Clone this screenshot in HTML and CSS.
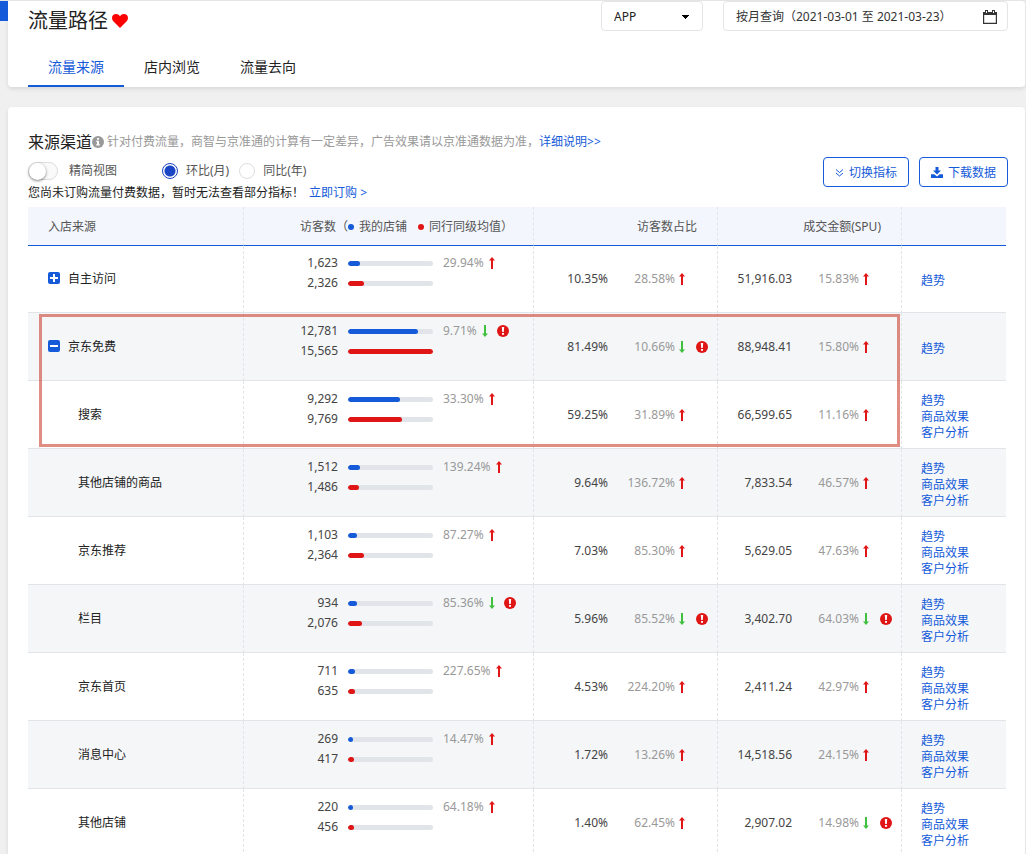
FILE: index.html
```html
<!DOCTYPE html>
<html lang="zh-CN">
<head>
    <meta charset="UTF-8">
    <meta name="viewport" content="width=device-width, initial-scale=1.0">
    <title>流量路径</title>
    <link rel="stylesheet" href="styles.css">
</head>
<body>
    <!-- 图标 -->
    <svg class="sprite" aria-hidden="true">
        <symbol id="i-up" viewBox="0 0 6 12"><path d="M3 0L6 3.6H4V12H2V3.6H0z"/></symbol>
        <symbol id="i-down" viewBox="0 0 6 12"><path d="M3 12L0 8.4H2V0H4V8.4H6z"/></symbol>
        <symbol id="i-alert" viewBox="0 0 12 12"><circle cx="6" cy="6" r="6" fill="#e01515"/><path d="M4.800 2h2.400L6.800 7H5.200zM5 7.900h2v1.900H5z" fill="#fff"/></symbol>
    </svg>

    <header class="panel page-head">
        <span class="side-tag"></span>
        <div class="head-row">
            <h1>流量路径
                <svg class="heart" viewBox="0 0 16 14"><path d="M8 14L1.3 7.2C-.5 5.2-.3 2.4 1.3 1 3.3-.7 6.3-.2 8 2.2 9.700-.2 12.700-.7 14.700 1c1.600 1.400 1.800 4.200 0 6.200z" fill="#f00"/></svg>
            </h1>
            <div class="filters">
                <select class="terminal" aria-label="终端">
                    <option>APP</option>
                </select>
                <div class="date-box">
                    <input type="text" aria-label="查询日期" value="按月查询（2021-03-01 至 2021-03-23）" readonly>
                    <svg class="calendar" viewBox="0 0 14 14"><path d="M.6 2.500h12.800v10.900H.6z" fill="none" stroke="#333" stroke-width="1.200"/><path d="M0 2h14v3H0zM2 0h3v3H2zM9 0h3v3H9z" fill="#333"/><path d="M3 1h1v2H3zM10 1h1v2h-1z" fill="#fff"/></svg>
                </div>
            </div>
        </div>
        <nav class="tabs">
            <a href="#" class="active">流量来源</a>
            <a href="#">店内浏览</a>
            <a href="#">流量去向</a>
        </nav>
    </header>

    <main class="panel source">
        <div class="source-head">
            <div>
                <div class="title-row">
                    <h2>来源渠道</h2>
                    <svg class="info" viewBox="0 0 12 12"><circle cx="6" cy="6" r="6" fill="#999"/><path d="M5 2h2v1.700H5zM4.200 4.700H7v3.600h.8v1.200H4.200V8.300H5V5.900h-.8z" fill="#fff"/></svg>
                    <p class="hint">针对付费流量，商智与京准通的计算有一定差异，广告效果请以京准通数据为准，<a href="#">详细说明&gt;&gt;</a></p>
                </div>
                <div class="option-row">
                    <label class="simple"><input type="checkbox" class="switch">精简视图</label>
                    <label class="compare"><input type="radio" name="compare" checked>环比(月)</label>
                    <label class="compare"><input type="radio" name="compare">同比(年)</label>
                </div>
                <p class="notice">您尚未订购流量付费数据，暂时无法查看部分指标！<a href="#">立即订购 &gt;</a></p>
            </div>
            <div class="actions">
                <button type="button"><svg class="chevrons" viewBox="0 0 8 8"><path d="M.5.500L4 3.500 7.500.500M.5 4L4 7 7.500 4" fill="none" stroke="#155bd9"/></svg>切换指标</button>
                <button type="button"><svg class="download" viewBox="0 0 12 11"><path d="M4.500 0h3v3.500H10L6 7.600 2 3.500h2.500zM0 7.200h3.300L6 9.500l2.700-2.300H12V11H0z" fill="#155bd9"/></svg>下载数据</button>
            </div>
        </div>

        <div class="table-wrap">
            <table>
                <colgroup>
                    <col>
                    <col class="col-visitor">
                    <col class="col-num">
                    <col class="col-num">
                    <col class="col-link">
                </colgroup>
                <thead>
                    <tr>
                        <th class="name">入店来源</th>
                        <th>访客数（<i class="dot blue"></i>我的店铺<i class="dot red"></i>同行同级均值）</th>
                        <th>访客数占比</th>
                        <th>成交金额(SPU)</th>
                        <th></th>
                    </tr>
                </thead>
                <tbody>
                    <tr>
                        <td class="name"><button type="button" class="toggle" aria-label="展开"><svg viewBox="0 0 12 12"><path d="M2 5h8v2H2zM5 2h2v8H5z"/></svg></button>自主访问</td>
                        <td class="visitor"><div class="bars">
                            <span class="n">1,623</span><span class="bar"><i class="blue" style="width:14%"></i></span><span class="rate">29.94%<svg class="up"><use href="#i-up"/></svg></span>
                            <span class="n">2,326</span><span class="bar"><i class="red" style="width:19%"></i></span>
                        </div></td>
                        <td><div class="pair"><span class="n">10.35%</span><span class="rate">28.58%</span><svg class="up"><use href="#i-up"/></svg></div></td>
                        <td><div class="pair"><span class="n">51,916.03</span><span class="rate">15.83%</span><svg class="up"><use href="#i-up"/></svg></div></td>
                        <td class="links"><a href="#">趋势</a></td>
                    </tr>
                    <tr>
                        <td class="name"><button type="button" class="toggle" aria-label="收起"><svg viewBox="0 0 12 12"><path d="M2 5h8v2H2z"/></svg></button>京东免费</td>
                        <td class="visitor"><div class="bars">
                            <span class="n">12,781</span><span class="bar"><i class="blue" style="width:82%"></i></span><span class="rate">9.71%<svg class="down"><use href="#i-down"/></svg><svg class="alert"><use href="#i-alert"/></svg></span>
                            <span class="n">15,565</span><span class="bar"><i class="red" style="width:100%"></i></span>
                        </div></td>
                        <td><div class="pair"><span class="n">81.49%</span><span class="rate">10.66%</span><svg class="down"><use href="#i-down"/></svg><svg class="alert"><use href="#i-alert"/></svg></div></td>
                        <td><div class="pair"><span class="n">88,948.41</span><span class="rate">15.80%</span><svg class="up"><use href="#i-up"/></svg></div></td>
                        <td class="links"><a href="#">趋势</a></td>
                    </tr>
                    <tr>
                        <td class="name child">搜索</td>
                        <td class="visitor"><div class="bars">
                            <span class="n">9,292</span><span class="bar"><i class="blue" style="width:61%"></i></span><span class="rate">33.30%<svg class="up"><use href="#i-up"/></svg></span>
                            <span class="n">9,769</span><span class="bar"><i class="red" style="width:64%"></i></span>
                        </div></td>
                        <td><div class="pair"><span class="n">59.25%</span><span class="rate">31.89%</span><svg class="up"><use href="#i-up"/></svg></div></td>
                        <td><div class="pair"><span class="n">66,599.65</span><span class="rate">11.16%</span><svg class="up"><use href="#i-up"/></svg></div></td>
                        <td class="links"><a href="#">趋势</a><a href="#">商品效果</a><a href="#">客户分析</a></td>
                    </tr>
                    <tr>
                        <td class="name child">其他店铺的商品</td>
                        <td class="visitor"><div class="bars">
                            <span class="n">1,512</span><span class="bar"><i class="blue" style="width:14%"></i></span><span class="rate">139.24%<svg class="up"><use href="#i-up"/></svg></span>
                            <span class="n">1,486</span><span class="bar"><i class="red" style="width:13%"></i></span>
                        </div></td>
                        <td><div class="pair"><span class="n">9.64%</span><span class="rate">136.72%</span><svg class="up"><use href="#i-up"/></svg></div></td>
                        <td><div class="pair"><span class="n">7,833.54</span><span class="rate">46.57%</span><svg class="up"><use href="#i-up"/></svg></div></td>
                        <td class="links"><a href="#">趋势</a><a href="#">商品效果</a><a href="#">客户分析</a></td>
                    </tr>
                    <tr>
                        <td class="name child">京东推荐</td>
                        <td class="visitor"><div class="bars">
                            <span class="n">1,103</span><span class="bar"><i class="blue" style="width:11%"></i></span><span class="rate">87.27%<svg class="up"><use href="#i-up"/></svg></span>
                            <span class="n">2,364</span><span class="bar"><i class="red" style="width:19%"></i></span>
                        </div></td>
                        <td><div class="pair"><span class="n">7.03%</span><span class="rate">85.30%</span><svg class="up"><use href="#i-up"/></svg></div></td>
                        <td><div class="pair"><span class="n">5,629.05</span><span class="rate">47.63%</span><svg class="up"><use href="#i-up"/></svg></div></td>
                        <td class="links"><a href="#">趋势</a><a href="#">商品效果</a><a href="#">客户分析</a></td>
                    </tr>
                    <tr>
                        <td class="name child">栏目</td>
                        <td class="visitor"><div class="bars">
                            <span class="n">934</span><span class="bar"><i class="blue" style="width:10%"></i></span><span class="rate">85.36%<svg class="down"><use href="#i-down"/></svg><svg class="alert"><use href="#i-alert"/></svg></span>
                            <span class="n">2,076</span><span class="bar"><i class="red" style="width:17%"></i></span>
                        </div></td>
                        <td><div class="pair"><span class="n">5.96%</span><span class="rate">85.52%</span><svg class="down"><use href="#i-down"/></svg><svg class="alert"><use href="#i-alert"/></svg></div></td>
                        <td><div class="pair"><span class="n">3,402.70</span><span class="rate">64.03%</span><svg class="down"><use href="#i-down"/></svg><svg class="alert"><use href="#i-alert"/></svg></div></td>
                        <td class="links"><a href="#">趋势</a><a href="#">商品效果</a><a href="#">客户分析</a></td>
                    </tr>
                    <tr>
                        <td class="name child">京东首页</td>
                        <td class="visitor"><div class="bars">
                            <span class="n">711</span><span class="bar"><i class="blue" style="width:8%"></i></span><span class="rate">227.65%<svg class="up"><use href="#i-up"/></svg></span>
                            <span class="n">635</span><span class="bar"><i class="red" style="width:8%"></i></span>
                        </div></td>
                        <td><div class="pair"><span class="n">4.53%</span><span class="rate">224.20%</span><svg class="up"><use href="#i-up"/></svg></div></td>
                        <td><div class="pair"><span class="n">2,411.24</span><span class="rate">42.97%</span><svg class="up"><use href="#i-up"/></svg></div></td>
                        <td class="links"><a href="#">趋势</a><a href="#">商品效果</a><a href="#">客户分析</a></td>
                    </tr>
                    <tr>
                        <td class="name child">消息中心</td>
                        <td class="visitor"><div class="bars">
                            <span class="n">269</span><span class="bar"><i class="blue" style="width:6%"></i></span><span class="rate">14.47%<svg class="up"><use href="#i-up"/></svg></span>
                            <span class="n">417</span><span class="bar"><i class="red" style="width:7%"></i></span>
                        </div></td>
                        <td><div class="pair"><span class="n">1.72%</span><span class="rate">13.26%</span><svg class="up"><use href="#i-up"/></svg></div></td>
                        <td><div class="pair"><span class="n">14,518.56</span><span class="rate">24.15%</span><svg class="up"><use href="#i-up"/></svg></div></td>
                        <td class="links"><a href="#">趋势</a><a href="#">商品效果</a><a href="#">客户分析</a></td>
                    </tr>
                    <tr>
                        <td class="name child">其他店铺</td>
                        <td class="visitor"><div class="bars">
                            <span class="n">220</span><span class="bar"><i class="blue" style="width:6%"></i></span><span class="rate">64.18%<svg class="up"><use href="#i-up"/></svg></span>
                            <span class="n">456</span><span class="bar"><i class="red" style="width:7%"></i></span>
                        </div></td>
                        <td><div class="pair"><span class="n">1.40%</span><span class="rate">62.45%</span><svg class="up"><use href="#i-up"/></svg></div></td>
                        <td><div class="pair"><span class="n">2,907.02</span><span class="rate">14.98%</span><svg class="down"><use href="#i-down"/></svg><svg class="alert"><use href="#i-alert"/></svg></div></td>
                        <td class="links"><a href="#">趋势</a><a href="#">商品效果</a><a href="#">客户分析</a></td>
                    </tr>
                </tbody>
            </table>
            <!-- 重点标注框 -->
            <div class="mark"></div>
        </div>
    </main>
</body>
</html>
```
FILE: styles.css
```css
* {
    box-sizing: border-box;
}
body {
    margin: 0;
    padding: 0 1px 0 8px;
    height: 100vh;
    overflow: hidden;
    border-top: 1px solid #e5e5e5;
    background: #f0f0f0;
    color: #222;
    font-family: "Noto Sans", "Noto Sans CJK SC", sans-serif;
    font-size: 12px;
    line-height: 20px;
}
h1, h2, p {
    margin: 0;
    font-weight: normal;
}
a {
    color: #155bd9;
    text-decoration: none;
}
button, input, select {
    margin: 0;
    font: inherit;
    color: inherit;
}
.sprite {
    display: none;
}
.panel {
    position: relative;
    padding: 0 17px 0 20px;
    background: #fff;
    border-radius: 4px;
    box-shadow: 0 2px 4px rgba(0, 0, 0, .1);
}

/* 页头 */
.page-head {
    margin-bottom: 20px;
    border-top-left-radius: 0;
}
.side-tag {
    position: absolute;
    left: -8px;
    top: 0;
    width: 8px;
    height: 20px;
    background: #155bd9;
}
.head-row {
    display: flex;
    justify-content: space-between;
    align-items: flex-start;
    height: 46px;
}
h1 {
    display: flex;
    align-items: center;
    gap: 4px;
    font-size: 20px;
    line-height: 40px;
}
.heart {
    width: 16px;
    height: 14px;
}
.filters {
    display: flex;
    gap: 20px;
}
.terminal, .date-box {
    height: 30px;
    border: 1px solid #e3e5e8;
    border-radius: 4px;
    background: #fff;
}
.terminal {
    width: 102px;
    padding: 1px 12px 0;
    appearance: none;
    background: linear-gradient(to bottom right, #000 50%, transparent 50%) 84px 13px / 4px 4px no-repeat,
                linear-gradient(to bottom left, #000 50%, transparent 50%) 80px 13px / 4px 4px no-repeat, #fff;
}
.date-box {
    display: flex;
    align-items: center;
    width: 285px;
    padding: 1px 10px 0 12px;
    color: #333;
}
.date-box input {
    flex: 1;
    min-width: 0;
    padding: 0;
    border: 0;
    outline: 0;
    background: none;
}
.calendar {
    width: 14px;
    height: 14px;
}
.tabs {
    display: flex;
}
.tabs a {
    padding: 2px 20px 0;
    border-bottom: 2px solid transparent;
    color: #222;
    font-size: 14px;
    line-height: 36px;
}
.tabs .active {
    border-color: #155bd9;
    color: #155bd9;
}

/* 来源渠道 */
.source {
    padding-top: 24px;
}
.source-head {
    display: flex;
    justify-content: space-between;
    margin-bottom: 4px;
}
.title-row {
    display: flex;
    align-items: center;
    height: 22px;
}
h2 {
    font-size: 16px;
    line-height: 22px;
}
.info {
    width: 12px;
    height: 12px;
    margin-right: 3px;
}
.hint {
    color: #999;
}
.option-row {
    display: flex;
    align-items: center;
    height: 20px;
    margin-top: 8px;
    color: #555;
}
.option-row label {
    display: flex;
    align-items: center;
}
.simple {
    gap: 11px;
    margin-right: 45px;
}
.compare {
    gap: 8px;
    margin-right: 10px;
}
.switch {
    appearance: none;
    width: 30px;
    height: 18px;
    border: 1px solid #ddd;
    border-radius: 9px;
    background: #fafafa;
}
.switch::before {
    content: "";
    display: block;
    width: 17px;
    height: 17px;
    border-radius: 50%;
    background: #fff;
    box-shadow: 0 1px 3px rgba(0, 0, 0, .5);
}
.compare input {
    appearance: none;
    width: 16px;
    height: 16px;
    border: 1px solid #ddd;
    border-radius: 50%;
}
.compare input:checked {
    border-color: #1a45c4;
    background: radial-gradient(circle, #1a45c4 5px, #fff 6px);
}
.notice {
    margin-top: 2px;
}
.notice a {
    margin-left: 5px;
}
.actions {
    display: flex;
    gap: 10px;
    margin-top: 26px;
}
.actions button {
    display: flex;
    align-items: center;
    gap: 5px;
    height: 30px;
    padding: 1px 11px 0;
    border: 1px solid #155bd9;
    border-radius: 4px;
    background: #fff;
    color: #155bd9;
    cursor: pointer;
}
.chevrons {
    width: 9px;
    height: 8px;
}
.download {
    width: 12px;
    height: 11px;
}

/* 数据表 */
.table-wrap {
    position: relative;
    margin-right: 2px;
}
table {
    width: 100%;
    table-layout: fixed;
    border-collapse: separate;
    border-spacing: 0;
}
.col-visitor {
    width: 290px;
}
.col-num {
    width: 184px;
}
.col-link {
    width: 105px;
}
th {
    height: 39px;
    padding: 2px 20px 0;
    border-bottom: 1px solid #155bd9;
    background: #f3f6fd;
    color: #555;
    font-weight: normal;
    text-align: right;
}
td {
    height: 68px;
    padding: 0;
    border-bottom: 1px solid #e1e4e8;
}
tbody tr:first-child td {
    height: 67px;
}
th + th, td + td {
    border-left: 1px dashed #e1e4e8;
}
tbody tr:nth-child(even) {
    background: #f4f6f8;
}
.name {
    padding-left: 20px;
    text-align: left;
}
.child {
    padding-left: 50px;
}
.dot {
    display: inline-block;
    width: 6px;
    height: 6px;
    margin: 0 5px 1px 0;
    border-radius: 50%;
}
.dot.red {
    margin-left: 11px;
}
.blue {
    background: #155bd9;
}
.red {
    background: #e01515;
}
.toggle {
    width: 12px;
    height: 12px;
    margin-right: 8px;
    padding: 0;
    border: 0;
    border-radius: 2px;
    background: #155bd9;
    vertical-align: -1px;
    cursor: pointer;
}
.toggle svg {
    display: block;
    fill: #fff;
}
.visitor {
    padding-bottom: 19px;
    vertical-align: bottom;
}
.bars {
    display: grid;
    grid-template-columns: 94px 85px auto;
    grid-auto-rows: 20px;
    column-gap: 10px;
    align-items: center;
}
.n {
    color: #444;
    text-align: right;
}
.bar {
    height: 5px;
    border-radius: 3px;
    background: #e1e4e8;
    overflow: hidden;
}
.bars .n:nth-child(4) {
    grid-column: 1;
}
.bar i {
    display: block;
    height: 5px;
    border-radius: 3px;
}
.rate {
    color: #999;
}
.bars .rate {
    display: flex;
    align-items: center;
}
.pair {
    display: flex;
    align-items: center;
}
.pair .n {
    width: 74px;
}
.pair .rate {
    width: 67px;
    text-align: right;
}
.up, .down {
    width: 6px;
    height: 12px;
    margin-left: 4px;
    fill: #e01515;
}
.bars .up, .bars .down {
    margin-left: 5px;
}
.down, .bars .down {
    fill: #3fc13f;
}
.alert {
    width: 12px;
    height: 12px;
    margin-left: 11px;
}
.bars .alert {
    margin-left: 9px;
}
.links {
    padding: 4px 0 0 19px;
    line-height: 16px;
}
.links a {
    display: block;
}
.mark {
    position: absolute;
    top: 107px;
    left: 11px;
    right: 106px;
    height: 133px;
    border: 3px solid rgba(208, 80, 64, .65);
}
```
